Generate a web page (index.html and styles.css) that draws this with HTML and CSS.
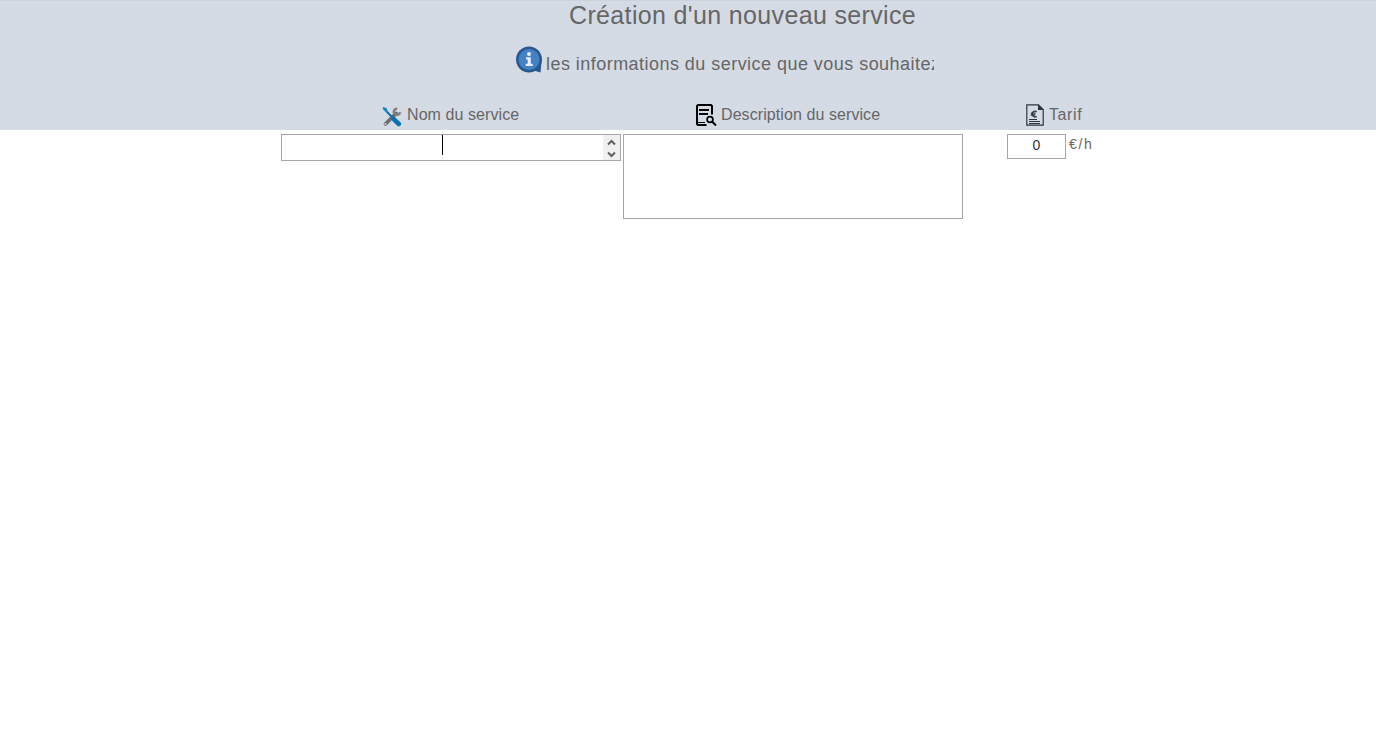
FILE: index.html
```html
<!DOCTYPE html>
<html lang="fr">
<head>
<meta charset="utf-8">
<title>Création d'un nouveau service</title>
<link rel="stylesheet" href="styles.css">
</head>
<body>
<header class="header">
  <h1 class="title">Création d'un nouveau service</h1>
  <div class="intro">
    <svg class="info-icon" width="28" height="28" viewBox="0 0 28 28">
      <path d="M26.500 16L25.500 26.500L17 24Z" fill="#28588c"/>
      <circle cx="14" cy="13.500" r="13" fill="#28588c"/>
      <circle cx="14" cy="13.500" r="10.500" fill="#4482c6"/>
      <circle cx="14" cy="8" r="2" fill="#e8eef5"/>
      <path d="M11 11.200h4.800v6.500h1.900v2.200h-7V17.700h2v-4.300H11z" fill="#e8eef5"/>
    </svg>
    <p class="intro-text">les informations du service que vous souhaitez</p>
  </div>
  <div class="columns labels">
    <div class="label label-name">
      <svg width="20" height="20" viewBox="0 0 20 20">
        <path d="M3.500 17L14 6.500" stroke="#6c6c6c" stroke-width="3.800" stroke-linecap="round"/>
        <path d="M15.200 1.800C12.500 1.500 11 4 12.300 6.300C13.800 8.800 17.500 8 18.200 5.200" fill="none" stroke="#808080" stroke-width="2.500"/>
        <circle cx="3.500" cy="17" r="1" fill="#d5dbe5"/>
        <path d="M1 1L4 2.200L5 5L12 12" fill="none" stroke="#0872b0" stroke-width="2"/>
        <path d="M1 1L5 2L5 5L2 4Z" fill="#1c8ac4"/>
        <path d="M12 12.300L16.800 17" stroke="#0872b0" stroke-width="4.600" stroke-linecap="round"/>
      </svg>
      <span>Nom du service</span>
    </div>
    <div class="label label-desc">
      <svg width="22" height="23" viewBox="0 0 22 23">
        <path d="M11.500 21H3L2 20V2L3 1H16L17 2V10.500M4 6h10M4 10h9" fill="none" stroke="#000" stroke-width="2"/>
        <path d="M3 18.500H10" stroke="#000"/>
        <circle cx="15" cy="15.500" r="2.900" fill="none" stroke="#000" stroke-width="1.700"/>
        <path d="M17 17.500L21 21.500" stroke="#000" stroke-width="2"/>
      </svg>
      <span>Description du service</span>
    </div>
    <div class="label label-rate">
      <svg width="18" height="22" viewBox="0 0 18 22">
        <path d="M.8.800H12.500L17.200 5.500V21.200H.8Z" fill="none" stroke="#2f343b" stroke-width="1.200"/>
        <path d="M12 .5V6H17.500Z" fill="#2f343b"/>
        <path d="M10.800 7.600C8 6.300 6.200 7.800 6.200 10s2 3.800 4.600 2.500M4.800 9.200h4.800M4.800 11h4.500" fill="none" stroke="#2f343b" stroke-width="1.300"/>
        <path d="M3 15.500h8M3 17.500h11M3 19.500h11" stroke="#2f343b" stroke-width="1"/>
      </svg>
      <span>Tarif</span>
    </div>
  </div>
</header>
<main class="columns fields">
  <div class="field name-field">
    <span class="caret"></span>
    <div class="spinner">
      <svg width="17" height="25" viewBox="0 0 17 25">
        <path d="M5 9.500L8.500 6L12 9.500M5 17.500L8.500 21L12 17.500" fill="none" stroke="#606060" stroke-width="2"/>
      </svg>
    </div>
  </div>
  <div class="field desc-field"></div>
  <div class="rate">
    <div class="field rate-field">0</div>
    <span class="unit">€/h</span>
  </div>
</main>
</body>
</html>
```

FILE: styles.css
```css
body {
  margin: 0;
  background: #fff;
  color: #666;
  font-family: "Liberation Sans", Arial, sans-serif;
}

.header {
  box-sizing: border-box;
  height: 130px;
  background: #d5dbe5;
  border-top: 1px solid #ccd3de;
}

.title {
  height: 30px;
  margin: 0 0 0 569px;
  font-size: 25px;
  line-height: 29px;
  font-weight: 400;
  letter-spacing: 0.35px;
  white-space: nowrap;
}

.intro {
  display: flex;
  height: 72px;
  padding: 15px 0 0 515px;
  box-sizing: border-box;
}

.info-icon {
  flex: none;
}

.intro-text {
  width: 388px;
  height: 26px;
  margin: 5px 0 0 3px;
  overflow: hidden;
  white-space: nowrap;
  font-size: 18px;
  line-height: 26px;
  letter-spacing: 0.46px;
}

.columns {
  display: grid;
  grid-template-columns: 340px 340px 140px;
  column-gap: 2px;
  padding-left: 281px;
}

.label {
  display: flex;
  gap: 5px;
  font-size: 16px;
  line-height: 24px;
  letter-spacing: 0.08px;
  white-space: nowrap;
}

.label svg {
  flex: none;
}

.label-name {
  padding-left: 101px;
}

.label-name svg {
  margin-top: 4px;
}

.label-desc {
  gap: 4px;
  padding-left: 72px;
}

.label-desc svg,
.label-rate svg {
  margin-top: 1px;
}

.label-rate {
  padding-left: 61px;
  letter-spacing: 0.6px;
}

.fields {
  padding-top: 4px;
}

.field {
  box-sizing: border-box;
  border: 1px solid #a6a6a6;
  background: #fff;
}

.name-field {
  display: flex;
  justify-content: space-between;
  height: 27px;
  padding-left: 160px;
}

.caret {
  width: 1px;
  height: 20px;
  background: #000;
}

.spinner {
  width: 17px;
  background: #f0f0f0;
}

.spinner svg {
  display: block;
}

.desc-field {
  height: 85px;
}

.rate {
  display: flex;
  gap: 3px;
  padding-left: 42px;
}

.rate-field {
  width: 59px;
  height: 25px;
  color: #333;
  font-size: 14px;
  line-height: 21px;
  text-align: center;
}

.unit {
  font-size: 14px;
  line-height: 21px;
  letter-spacing: 1.7px;
}
```
